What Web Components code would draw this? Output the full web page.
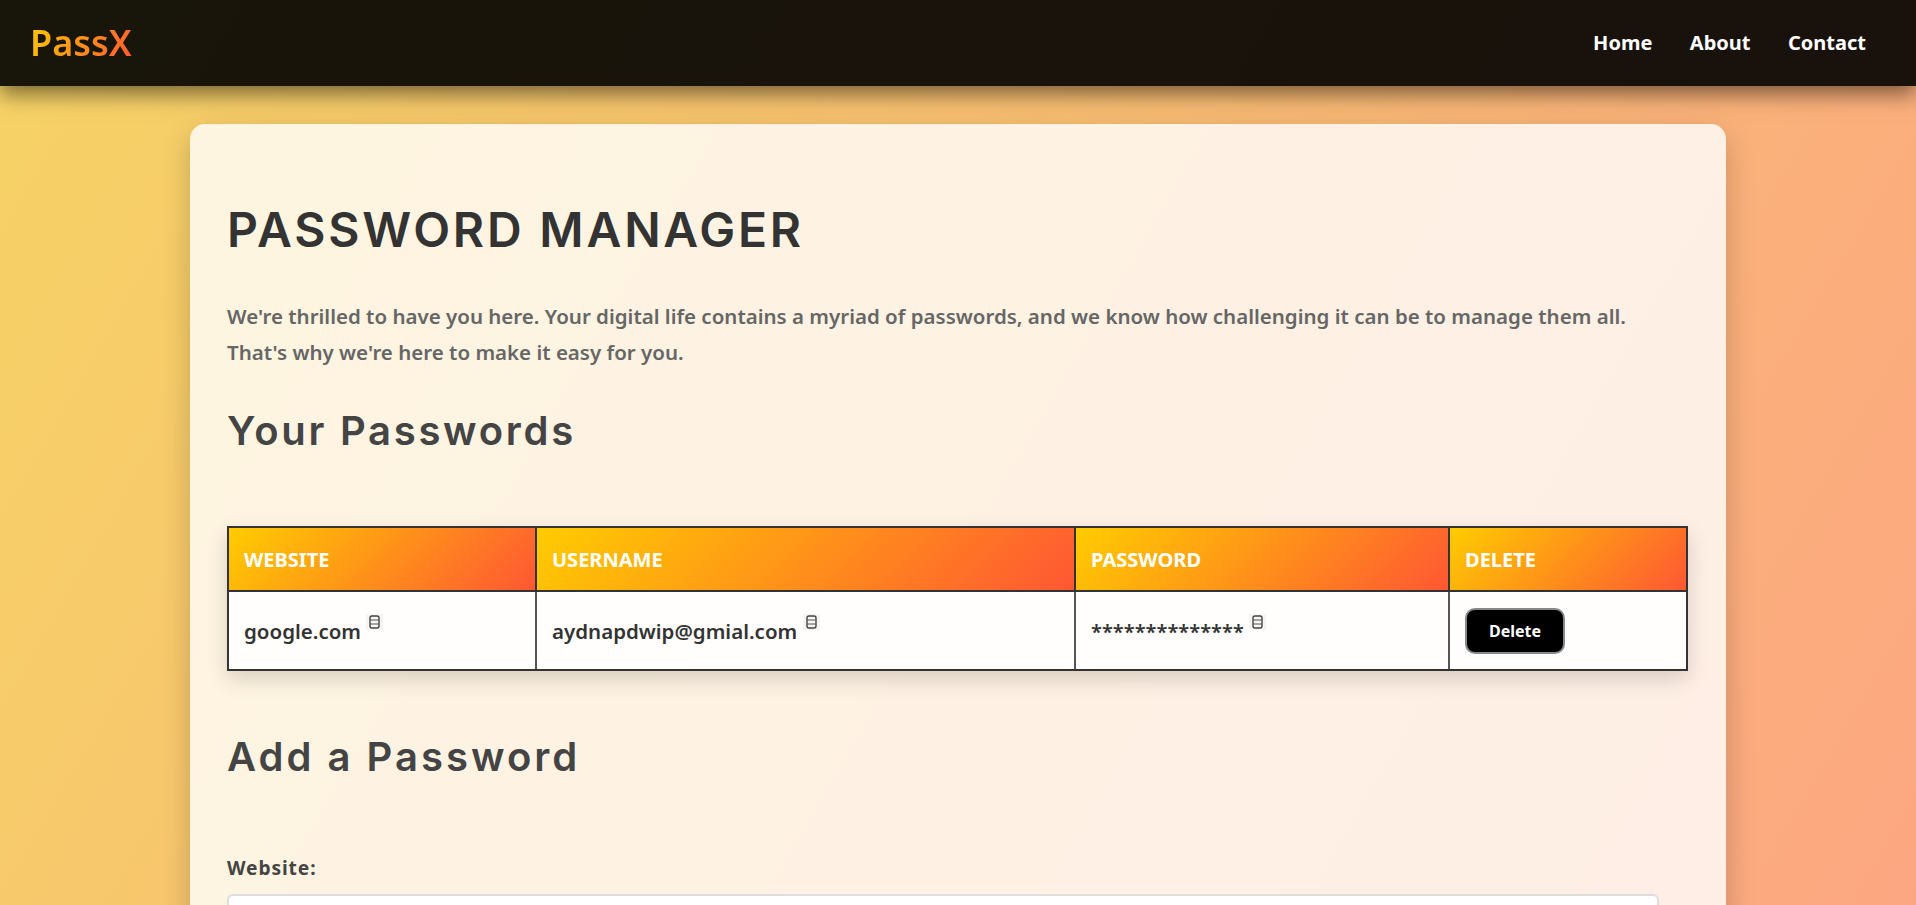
<!DOCTYPE html>
<html lang="en">
<head>
<meta charset="utf-8">
<title>PassX</title>
<style>
    html, body { margin: 0; padding: 0; }
    html { overflow: hidden; }
    body {
        min-height: 1500px;
        font-family: "Noto Sans", sans-serif;
        background: linear-gradient(120deg, #f6d365 0%, #fda085 100%);
        color: #333;
    }
</style>
</head>
<body>
<pass-nav></pass-nav>
<pass-card>
    <h-title slot="title">PASSWORD MANAGER</h-title>
    <span slot="intro">We're thrilled to have you here. Your digital life contains a myriad of passwords, and we know how challenging it can be to manage them all. That's why we're here to make it easy for you.</span>
    <sub-title slot="list-title" style="--ls: 2.7px">Your Passwords</sub-title>
    <password-table slot="table"></password-table>
    <sub-title slot="form-title" style="--ls: 3px; margin-top: 61px">Add a Password</sub-title>
    <form-field slot="form" label="Website:"></form-field>
</pass-card>

<script>
class PassNav extends HTMLElement {
    constructor() {
        super();
        this.attachShadow({ mode: 'open' });
        this.shadowRoot.innerHTML = `
            <style>
                :host {
                    display: flex;
                    justify-content: space-between;
                    align-items: center;
                    box-sizing: border-box;
                    height: 86px;
                    padding: 0 50px 2px 30px;
                    background: rgba(0, 0, 0, 0.9);
                    box-shadow: 0 8px 20px rgba(0, 0, 0, 0.5);
                    position: relative;
                }
                .logo {
                    font-size: 36px;
                    font-weight: 600;
                    background: linear-gradient(120deg, #ffcc00, #ff5733);
                    -webkit-background-clip: text;
                    background-clip: text;
                    color: transparent;
                }
                nav { display: flex; gap: 37.5px; }
                a { color: #fff; font-size: 20px; font-weight: 700; text-decoration: none; }
            </style>
            <div class="logo">PassX</div>
            <nav><a href="#">Home</a><a href="#">About</a><a href="#">Contact</a></nav>
        `;
    }
}
customElements.define('pass-nav', PassNav);

class PassCard extends HTMLElement {
    constructor() {
        super();
        this.attachShadow({ mode: 'open' });
        this.shadowRoot.innerHTML = `
            <style>
                :host {
                    display: block;
                    box-sizing: border-box;
                    width: 1536px;
                    margin: 38px auto 0;
                    padding: 76px 38px 40px 37px;
                    border-radius: 15px;
                    background: rgba(255, 255, 255, 0.8);
                    box-shadow: 0 10px 30px rgba(0, 0, 0, 0.2);
                }
                .intro {
                    max-width: 1432px;
                    margin-top: 38px;
                    font-size: 20.5px;
                    font-weight: 600;
                    line-height: 36px;
                    color: #666;
                }
            </style>
            <slot name="title"></slot>
            <div class="intro"><slot name="intro"></slot></div>
            <slot name="list-title"></slot>
            <slot name="table"></slot>
            <slot name="form-title"></slot>
            <slot name="form"></slot>
        `;
    }
}
customElements.define('pass-card', PassCard);

class HTitle extends HTMLElement {
    constructor() {
        super();
        this.attachShadow({ mode: 'open' });
        this.shadowRoot.innerHTML = `
            <style>
                :host {
                    display: block;
                    font-family: Inter, "Noto Sans", sans-serif;
                    font-size: 48px;
                    font-weight: 600;
                    line-height: 60px;
                    letter-spacing: 2.8px;
                    color: #333;
                }
            </style>
            <slot></slot>
        `;
    }
}
customElements.define('h-title', HTitle);

class SubTitle extends HTMLElement {
    constructor() {
        super();
        this.attachShadow({ mode: 'open' });
        this.shadowRoot.innerHTML = `
            <style>
                :host {
                    display: block;
                    font-family: Inter, "Noto Sans", sans-serif;
                    font-size: 40px;
                    font-weight: 600;
                    line-height: 50px;
                    letter-spacing: var(--ls, 2.8px);
                    color: #444;
                    margin-top: 36px;
                }
            </style>
            <slot></slot>
        `;
    }
}
customElements.define('sub-title', SubTitle);

class CopyIcon extends HTMLElement {
    constructor() {
        super();
        this.attachShadow({ mode: 'open' });
        this.shadowRoot.innerHTML = `
            <style>
                :host { display: inline-block; width: 17px; height: 16px; vertical-align: 9px; background: #f6f4f1; }
                svg { display: block; }
            </style>
            <svg width="17" height="16" viewBox="0 0 17 16">
                <rect x="4" y="2" width="9" height="12" rx="2" fill="none" stroke="#444" stroke-width="1.4"/>
                <path d="M4 6h9M4 10h9" stroke="#555" stroke-width="1.2"/>
            </svg>
        `;
    }
}
customElements.define('copy-icon', CopyIcon);

class PasswordTable extends HTMLElement {
    constructor() {
        super();
        this.attachShadow({ mode: 'open' });
        this.shadowRoot.innerHTML = `
            <style>
                :host {
                    display: block;
                    margin-top: 70px;
                    box-shadow: 0 8px 20px rgba(0, 0, 0, 0.15);
                }
                table { width: 100%; table-layout: fixed; border-collapse: collapse; }
                th, td { border: 2px solid #333; padding: 0 15px; text-align: left; }
                th {
                    height: 64px;
                    box-sizing: border-box;
                    background: linear-gradient(135deg, #ffcc00, #ff5733);
                    color: #fff;
                    font-size: 20px;
                    font-weight: 700;
                    text-transform: uppercase;
                }
                td {
                    height: 79px;
                    box-sizing: border-box;
                    background: rgba(255, 255, 255, 0.9);
                    color: #333;
                    font-size: 20.5px;
                    font-weight: 600;
                    padding-bottom: 2px;
                    border-left-color: #555;
                    border-right-color: #555;
                }
                td:first-child { border-left-color: #333; }
                td:last-child { border-right-color: #333; padding-bottom: 0; }
                .stars { font-size: 20px; }
                button {
                    display: block;
                    width: 100px;
                    height: 46px;
                    border-radius: 10px;
                    border: 2px solid #888;
                    background: #000;
                    color: #fff;
                    font: 700 16px "Noto Sans", sans-serif;
                }
            </style>
            <table>
                <colgroup><col style="width:308px"><col style="width:539px"><col style="width:374px"><col></colgroup>
                <thead><tr><th>Website</th><th>Username</th><th>Password</th><th>Delete</th></tr></thead>
                <tbody><tr>
                    <td>google.com <copy-icon></copy-icon></td>
                    <td>aydnapdwip@gmial.com <copy-icon></copy-icon></td>
                    <td><span class="stars">**************</span> <copy-icon></copy-icon></td>
                    <td><button>Delete</button></td>
                </tr></tbody>
            </table>
        `;
    }
}
customElements.define('password-table', PasswordTable);

class FormField extends HTMLElement {
    constructor() {
        super();
        this.attachShadow({ mode: 'open' });
        this.shadowRoot.innerHTML = `
            <style>
                :host { display: block; margin-top: 72px; }
                label { display: block; font-size: 19.2px; font-weight: 700; color: #444; letter-spacing: 0.9px; margin-bottom: 13px; }
                input {
                    display: block;
                    box-sizing: border-box;
                    width: 1432px;
                    height: 52px;
                    border: 2px solid #ddd;
                    border-radius: 6px;
                    background: #fff;
                }
            </style>
            <label>${this.getAttribute('label')}</label>
            <input type="text">
        `;
    }
}
customElements.define('form-field', FormField);
</script>
</body>
</html>
